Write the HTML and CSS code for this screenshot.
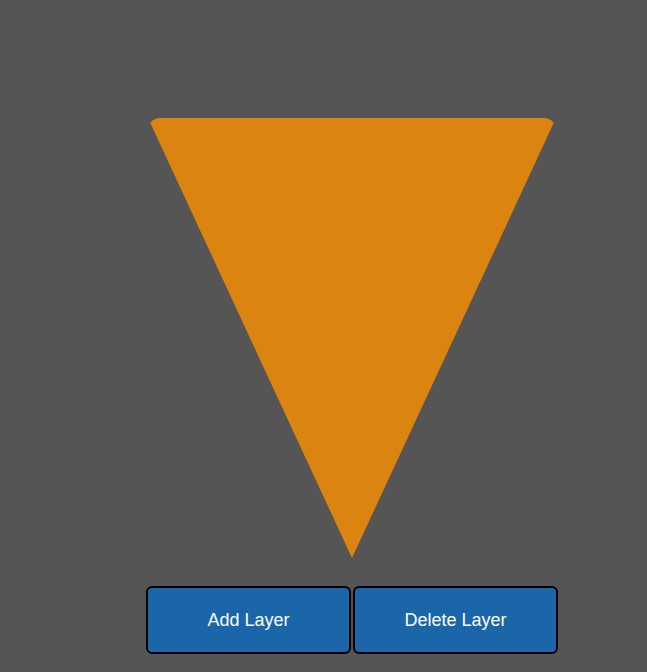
FILE: index.html
```html
<!DOCTYPE html>
<html>
<head>
<meta charset="utf-8">
<link rel="stylesheet" href="styles.css">
</head>
<body>
<div class="stage">
  <div class="triangle"></div>
  <div class="controls">
    <button class="btn">Add Layer</button>
    <button class="btn">Delete Layer</button>
  </div>
</div>
</body>
</html>
```
FILE: styles.css
```css
html, body {
  margin: 0;
  padding: 0;
  background: #555555;
  height: 100%;
}
body {
  font-family: "Liberation Sans", Arial, sans-serif;
}
.stage {
  display: flex;
  flex-direction: column;
  align-items: center;
  padding-top: 118px;
  padding-left: 57px;
}
.triangle {
  width: 0;
  height: 0;
  border-left: 204px solid transparent;
  border-right: 204px solid transparent;
  border-top: 440px solid #db8410;
  border-radius: 12px;
}
.controls {
  display: flex;
  gap: 2px;
  margin-top: 28px;
}
.btn {
  width: 205px;
  height: 68px;
  background: #1b66a8;
  color: #ffffff;
  border: 2px solid #000000;
  border-radius: 6px;
  font-family: "Liberation Sans", Arial, sans-serif;
  font-size: 18px;
  padding: 0;
}
```
